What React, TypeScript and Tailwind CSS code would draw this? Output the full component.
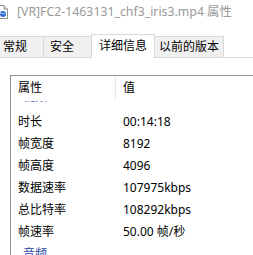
import React from "react";

const font = { fontFamily: '"Noto Sans", "Noto Sans CJK SC", sans-serif' };

const rows: [string, string][] = [
  ["时长", "00:14:18"],
  ["帧宽度", "8192"],
  ["帧高度", "4096"],
  ["数据速率", "107975kbps"],
  ["总比特率", "108292kbps"],
  ["帧速率", "50.00 帧/秒"],
];

function FileIcon() {
  return (
    <svg width="12" height="14" viewBox="0 0 12 14" className="shrink-0">
      <path d="M1 0.5 H8 L11.5 4 V13.5 H1 Z" fill="#ffffff" stroke="#8c8c8c" />
      <path d="M8 0.5 V4 H11.5" fill="#e8e8e8" stroke="#8c8c8c" />
      <circle cx="7" cy="9" r="3" fill="#2f6fd6" />
      <path d="M4 8.5 L9 8.5" stroke="#9cc1f2" strokeWidth="1" />
    </svg>
  );
}

export default function App() {
  return (
    <div
      className="w-[253px] h-[255px] overflow-hidden bg-white text-[12px] text-black flex flex-col"
      style={font}
    >
      {/* Title bar */}
      <div className="h-[34px] shrink-0 flex items-start pt-[4px]">
        <div className="ml-[-4px] mt-[1px]">
          <FileIcon />
        </div>
        <div className="ml-[9px] text-[12.3px] leading-[15px] text-[#999999] whitespace-nowrap">
          [VR]FC2-1463131_chf3_iris3.mp4 属性
        </div>
      </div>

      {/* Tabs */}
      <div className="h-[24px] shrink-0 flex items-end border-b border-[#d9d9d9] leading-[16px]">
        <div className="ml-[-15px] w-[59px] h-[21px] bg-[#f0f0f0] border-l border-t border-r border-[#d9d9d9] pl-[17px] pt-[2px] whitespace-nowrap">
          常规
        </div>
        <div className="w-[47px] h-[21px] bg-[#f0f0f0] border-t border-[#d9d9d9] pl-[6px] pt-[2px] whitespace-nowrap">
          安全
        </div>
        <div className="w-[64px] h-[24px] -mb-px bg-white border-l border-t border-r border-[#d9d9d9] pl-[7px] pt-[3px] relative z-10 whitespace-nowrap">
          详细信息
        </div>
        <div className="w-[69px] h-[21px] bg-[#f0f0f0] border-t border-r border-[#d9d9d9] pl-[4px] pt-[2px] whitespace-nowrap">
          以前的版本
        </div>
      </div>

      {/* Panel */}
      <div className="flex-1 min-h-0 pt-[17px] pl-[10px]">
        <div className="h-full border-l border-t border-[#8e939b] flex flex-col">
          {/* Header */}
          <div className="h-[25px] shrink-0 flex bg-white">
            <div className="w-[104px] pl-[7px] pt-[4px] leading-[16px]">属性</div>
            <div className="w-px h-[24px] bg-[#e5e5e5]" />
            <div className="pl-[7px] pt-[4px] leading-[16px]">值</div>
          </div>
          {/* Body */}
          <div className="flex-1 min-h-0 overflow-hidden">
            <div className="mt-[-12px]">
              <div className="h-[22px] pt-0 pl-[12px] leading-[16px] text-[#2a4aa6]">视频</div>
              {rows.map(([k, v]) => (
                <div key={k} className="h-[22px] flex items-center">
                  <div className="w-[105px] pl-[7px] whitespace-nowrap">{k}</div>
                  <div className="pl-[7px] whitespace-nowrap">{v}</div>
                </div>
              ))}
              <div className="h-[22px] flex items-center pl-[12px] text-[#2a4aa6]">音频</div>
            </div>
          </div>
        </div>
      </div>
    </div>
  );
}
